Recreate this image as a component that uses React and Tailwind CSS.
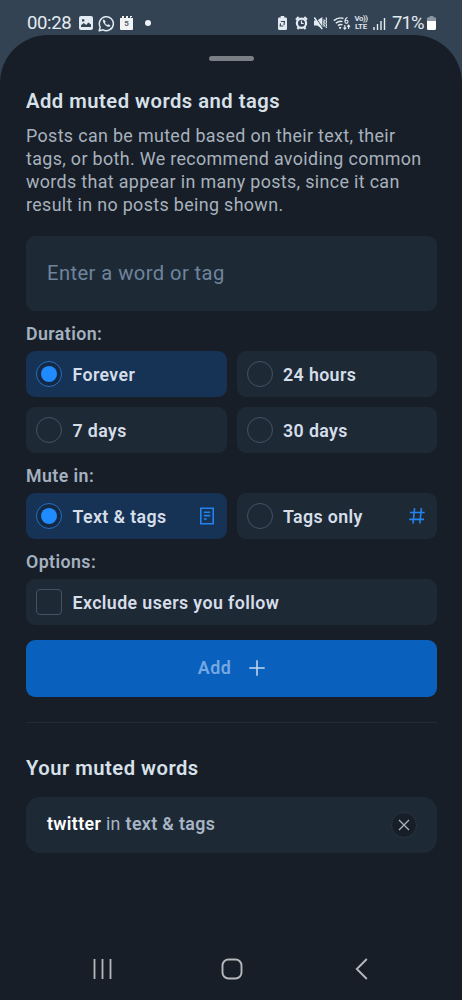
import React from "react";

function StatusBar() {
  return (
    <div className="flex h-[35px] items-start pl-[27px] pr-[26px] text-[#e3ebf2]">
      <div className="flex h-[46px] w-full shrink-0 items-center">
        <span className="w-[46px] whitespace-nowrap text-[18.5px] leading-none tracking-[-0.35px]">00:28</span>
        <svg className="ml-[6px] h-[14px] w-[14px]" viewBox="0 0 14 14">
          <path fillRule="evenodd" fill="currentColor" d="M2 0h10a2 2 0 0 1 2 2v10a2 2 0 0 1-2 2H2a2 2 0 0 1-2-2V2a2 2 0 0 1 2-2Zm0 11h10V8.500L9.300 6.500 7.200 9 4.800 7 2 9.200Z M3 3.200h2.300v2.200H3Z" />
        </svg>
        <svg className="ml-[5px] h-[17px] w-[17px]" viewBox="0 0 17 17" fill="none">
          <path d="M1.200 15.800l1-3.800A7 7 0 1 1 5 14.800Z" stroke="currentColor" strokeWidth="1.500" strokeLinejoin="round" />
          <path d="M5.900 4.300 4.900 5.200c-.3 3 3.500 7 6.600 6.500l1-1.200-2.100-1.300-1.100.9c-1.100-.5-1.900-1.300-2.400-2.400l.8-1Z" fill="currentColor" />
        </svg>
        <div className="ml-[5px] flex h-[14px] w-[13px] items-center justify-center rounded-[1px] border-t-2 border-dotted border-[#334353] bg-[#f1f3f5] text-[8px] font-bold leading-none text-[#56616c]">5</div>
        <span className="ml-[12px] h-[6px] w-[6px] rounded-full bg-[#eef3f7]" />
        <div className="ml-auto flex items-center">
          <svg className="h-[14px] w-[9px]" viewBox="0 0 10 14" preserveAspectRatio="none">
            <path fill="currentColor" d="M3 0h4v1.400h1.500A1.500 1.500 0 0 1 10 3v9.500A1.500 1.500 0 0 1 8.500 14h-7A1.500 1.500 0 0 1 0 12.500V3a1.500 1.500 0 0 1 1.500-1.600H3Z" />
            <path d="M3.200 5.500h4l-.6 3.600M2.800 7.300 2.400 10h3.400" fill="none" stroke="#334353" strokeWidth="1.200" />
          </svg>
          <svg className="ml-[8px] h-[14px] w-[13px]" viewBox="0 0 13 14">
            <circle cx="6.500" cy="7.200" r="4.600" fill="none" stroke="currentColor" strokeWidth="2.200" />
            <path d="M1 3.700 3.700 1M12 3.700 9.300 1M2.500 13l1.400-1.700M10.500 13l-1.400-1.700" stroke="currentColor" strokeWidth="2.200" />
            <path d="M6.500 4.500v3h2.200" fill="none" stroke="currentColor" strokeWidth="1.200" />
          </svg>
          <svg className="ml-[6px] h-[14px] w-[13px]" viewBox="0 0 14 14" preserveAspectRatio="none">
            <path fill="currentColor" d="M0 4.500h3.500L9 1v12L3.500 9.500H0Z" />
            <path d="M1.400 1 9.600 12.400" stroke="#334353" strokeWidth="1.100" />
            <path d="M.4 1.500 8.800 13" stroke="currentColor" strokeWidth="1.500" />
            <path d="M10.400 3.500l.8 1.200-.8 1.200.8 1.200-.8 1.200.8 1.200-.8 1.200M12.800 1.500l.8 1.500-.8 1.500.8 1.500-.8 1.500.8 1.500-.8 1.500.8 1.500" fill="none" stroke="currentColor" strokeWidth="1.200" />
          </svg>
          <svg className="ml-[6px] h-[15px] w-[18px]" viewBox="0 0 19 15" fill="none" stroke="currentColor">
            <path d="M.8 4.500Q6 .2 11 2.200M3 7.200Q6.500 4.200 10 5.500M5.200 9.800Q7.500 8 10 9" strokeWidth="1.500" />
            <circle cx="7.500" cy="12" r="1.200" fill="currentColor" stroke="none" />
            <path d="M15.300 1.200c-2 .6-2.600 2-2.600 3.900" strokeWidth="1.200" />
            <circle cx="14.200" cy="5.700" r="1.600" strokeWidth="1.200" />
            <path d="M12.500 9v4.200M11 11.900l1.500 1.500 1.500-1.500M16.500 13.400V9.200M15 10.700l1.500-1.500 1.500 1.500" strokeWidth="1.200" />
          </svg>
          <span className="ml-[3px] flex w-[14px] flex-col items-center text-[7.800px] font-semibold leading-[8px]">
            <span className="tracking-[-0.4px]">Vo))</span>
            <span className="tracking-[-0.1px]">LTE</span>
          </span>
          <svg className="ml-[5px] h-[13px] w-[13px]" viewBox="0 0 13 13">
            <path d="M1 10v3M4.500 7v6M8 4v9M11.500 1v12" stroke="currentColor" strokeWidth="1.400" />
          </svg>
          <span className="ml-[6px] w-[32px] whitespace-nowrap text-[18.5px] leading-none tracking-[-0.9px]">71%</span>
          <svg className="ml-[3px] h-[14px] w-[9px]" viewBox="0 0 10 14" preserveAspectRatio="none">
            <path d="M3 0h4v1.300h1.500A1.500 1.500 0 0 1 10 3v2H0V3a1.500 1.500 0 0 1 1.500-1.700H3Z" fill="#8b96a1" />
            <path d="M0 5h10v7.500a1.500 1.500 0 0 1-1.500 1.500h-7A1.500 1.500 0 0 1 0 12.500Z" fill="#fff" />
          </svg>
        </div>
      </div>
    </div>
  );
}

function Radio({ label, selected, icon }) {
  return (
    <div className={`flex h-[46px] items-center rounded-[9px] pl-[10px] pr-[12px] ${selected ? "bg-[#163254]" : "bg-[#1e2936]"}`}>
      <span className={`flex h-[26px] w-[26px] shrink-0 items-center justify-center rounded-full border-[1.5px] ${selected ? "border-[#2570c4] bg-[#152944]" : "border-[#435366]"}`}>
        {selected && <span className="h-[16px] w-[16px] rounded-full bg-[#208bfe]" />}
      </span>
      <span className="ml-[10.500px] mt-[2px] whitespace-nowrap text-[17.8px] font-semibold leading-6 tracking-[0.38px] text-[#d5dee8]">{label}</span>
      {icon && <span className="ml-auto">{icon}</span>}
    </div>
  );
}

const noteIcon = (
  <svg className="h-[18px] w-[16px]" viewBox="0 0 16 18" fill="none" stroke="#2384ee" strokeWidth="1.600">
    <path d="M1.800 1.200h12.400v15.600H1.800ZM4.800 5.200h6.400M4.800 8.600h6.400M4.800 12h3" />
  </svg>
);

const hashIcon = (
  <svg className="h-[18px] w-[16px]" viewBox="0 0 16 18" fill="none" stroke="#2384ee" strokeWidth="1.600">
    <path d="M5.600 1.200 4 16.500M12.400 1.200l-1.600 15.300M.9 5.500h14.800M.2 12.400H15" />
  </svg>
);

function Label({ children }) {
  return <h3 className="text-[17.8px] font-semibold leading-6 tracking-[0.42px] text-[#a3b1c0]">{children}</h3>;
}

export default function App() {
  return (
    <div className="flex h-[1000px] w-[462px] flex-col overflow-hidden bg-[#334353] font-['Roboto',sans-serif]">
      <StatusBar />
      <main className="flex flex-1 flex-col rounded-t-[48px] bg-[#171e27] pl-[26px] pr-[25px] pt-[21px]">
        <div className="h-[5px] w-[45px] self-center rounded-full bg-[#7a7f86]" />
        <h1 className="mt-[27px] whitespace-nowrap text-[20.2px] font-semibold leading-[26px] tracking-[0.5px] text-[#d8e1ea]">Add muted words and tags</h1>
        <p className="mt-[11px] whitespace-nowrap text-[17.9px] leading-[22.900px] tracking-[0.34px] text-[#a7b2be]">
          Posts can be muted based on their text, their<br />
          tags, or both. We recommend avoiding common<br />
          words that appear in many posts, since it can<br />
          result in no posts being shown.
        </p>
        <div className="mt-[19px] flex h-[75px] shrink-0 items-center rounded-[9px] bg-[#1e2936] pl-[21px] text-[20.2px] tracking-[0.42px] text-[#6e859d]">Enter a word or tag</div>

        <section className="mt-[11px] flex flex-col gap-[5px]">
          <Label>Duration:</Label>
          <div className="grid grid-cols-2 gap-[10px]">
            <Radio label="Forever" selected />
            <Radio label="24 hours" />
            <Radio label="7 days" />
            <Radio label="30 days" />
          </div>
        </section>
        <section className="mt-[11px] flex flex-col gap-[5px]">
          <Label>Mute in:</Label>
          <div className="grid grid-cols-2 gap-[10px]">
            <Radio label="Text & tags" selected icon={noteIcon} />
            <Radio label="Tags only" icon={hashIcon} />
          </div>
        </section>
        <section className="mt-[11px] flex flex-col gap-[5px]">
          <Label>Options:</Label>
          <div className="flex h-[46px] items-center rounded-[9px] bg-[#1e2936] pl-[10px]">
            <span className="h-[26px] w-[26px] rounded-[4px] border-[1.5px] border-[#435366]" />
            <span className="ml-[10.500px] mt-[2px] text-[17.8px] font-semibold leading-6 tracking-[0.4px] text-[#d5dee8]">Exclude users you follow</span>
          </div>
        </section>

        <div className="mt-[15px] flex h-[57px] shrink-0 items-center justify-center rounded-[9px] bg-[#0a60bd]">
          <span className="mt-px text-[17.9px] font-semibold tracking-[0.4px] text-[#74a8e2]">Add</span>
          <svg className="ml-[18px] h-[16px] w-[16px]" viewBox="0 0 16 16">
            <path d="M8 .3v15.400M.3 8h15.400" stroke="#c5daf3" strokeWidth="1.500" />
          </svg>
        </div>
        <div className="mt-[25px] h-px shrink-0 bg-[#212b36]" />
        <h2 className="mt-[32px] text-[20.2px] font-semibold leading-[26px] tracking-[0.5px] text-[#d8e1ea]">Your muted words</h2>
        <div className="mt-[16px] flex h-[56px] shrink-0 items-center justify-between rounded-[14px] bg-[#1e2936] pl-[21px] pr-[20px]">
          <span className="whitespace-nowrap text-[17.8px] tracking-[0.36px] text-[#a7b5c4]">
            <b className="font-semibold text-white">twitter</b> in <b className="font-semibold">text &amp; tags</b>
          </span>
          <span className="flex h-[26px] w-[26px] items-center justify-center rounded-full border border-[#273340] bg-[#171e27]">
            <svg className="h-[12px] w-[12px]" viewBox="0 0 12 12">
              <path d="m1 1 10 10M11 1 1 11" stroke="#a7b2be" strokeWidth="1.300" />
            </svg>
          </span>
        </div>

        <nav className="mb-[20px] mt-auto flex h-[22px] shrink-0 items-center pl-[67px] text-[#b5b8bc]">
          <svg className="h-[20px] w-[19px]" viewBox="0 0 19 20">
            <path d="M1.500 0v20M9.500 0v20M17.500 0v20" stroke="currentColor" strokeWidth="1.800" />
          </svg>
          <svg className="ml-[109px] h-[22px] w-[22px]" viewBox="0 0 22 22">
            <rect x="1.500" y="1.500" width="19" height="19" rx="6" fill="none" stroke="currentColor" strokeWidth="1.900" />
          </svg>
          <svg className="ml-[112px] h-[22px] w-[13px] shrink-0" viewBox="0 0 13 22">
            <path d="M11.800 1 1.800 11l10 10" fill="none" stroke="currentColor" strokeWidth="1.900" />
          </svg>
        </nav>
      </main>
    </div>
  );
}
